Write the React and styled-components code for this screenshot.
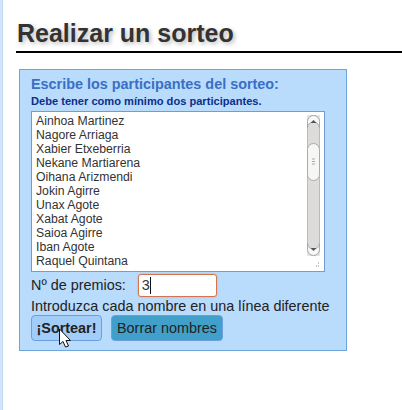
import React from 'react';
import styled, { createGlobalStyle } from 'styled-components';

const names = [
  'Ainhoa Martinez',
  'Nagore Arriaga',
  'Xabier Etxeberria',
  'Nekane Martiarena',
  'Oihana Arizmendi',
  'Jokin Agirre',
  'Unax Agote',
  'Xabat Agote',
  'Saioa Agirre',
  'Iban Agote',
  'Raquel Quintana',
];

const GlobalStyle = createGlobalStyle`
  html, body {
    margin: 0;
    padding: 0;
    background: #fff;
    font-family: "Liberation Sans", Arial, sans-serif;
    overflow: hidden;
  }
`;

const Page = styled.div`
  box-sizing: border-box;
  width: 402px;
  height: 410px;
  background: #fff;
  border-left: 2px solid #d3e6f9;
  box-shadow: inset 1px 0 0 #bcd8f3;
  padding: 15px 0 0 14px;
  overflow: hidden;
`;

const Title = styled.h1`
  margin: 0;
  padding: 3px 0 3px 1px;
  height: 30px;
  font-size: 25px;
  line-height: 30px;
  font-weight: bold;
  color: #333;
  text-shadow: 2px 2px 4px #bbb;
  border-bottom: 2px solid #000;
`;

const Panel = styled.div`
  box-sizing: border-box;
  width: 328px;
  height: 282px;
  margin: 16px 0 0 3px;
  padding: 6px 11px 0;
  background: #b9dbfc;
  border: 1px solid #6ea6dc;
  font-size: 14.4px;
  color: #222;
`;

const Heading = styled.div`
  font-size: 14.4px;
  line-height: 16px;
  font-weight: bold;
  color: #3a6fc4;
`;

const Note = styled.div`
  margin-top: 3px;
  font-size: 11.1px;
  line-height: 12px;
  font-weight: bold;
  color: #0b2f8a;
`;

const NameBox = styled.div`
  position: relative;
  box-sizing: border-box;
  width: 294px;
  height: 161px;
  margin-top: 4px;
  padding: 2px 4px;
  background: #fff;
  border: 1px solid #6f9fd0;
  overflow: hidden;
`;

const NameLine = styled.div`
  font-size: 12.24px;
  line-height: 14px;
  color: #333;
  white-space: nowrap;
`;

const Scroll = styled.svg`
  position: absolute;
  top: 3px;
  right: 4px;
`;

const FieldRow = styled.div`
  display: flex;
  align-items: center;
  gap: 12px;
  margin-top: 2px;
  height: 23px;
  line-height: 23px;
`;

const NumberField = styled.div`
  box-sizing: border-box;
  display: flex;
  align-items: center;
  width: 79px;
  height: 23px;
  padding: 0 3px;
  background: #fff;
  border: 1px solid #cf7650;
  border-radius: 3px;
  box-shadow: 0 0 2px #e8a080;
  font-size: 14.4px;
  color: #333;
`;

const Caret = styled.span`
  display: inline-block;
  width: 1px;
  height: 17px;
  background: #111;
`;

const Hint = styled.div`
  height: 18px;
  line-height: 18px;
  white-space: nowrap;
`;

const Buttons = styled.div`
  display: flex;
  gap: 9px;
`;

const Button = styled.div`
  position: relative;
  box-sizing: border-box;
  height: 26px;
  padding: 0 ${p => (p.$primary ? '4.5px' : '5px')};
  line-height: 24px;
  font-size: 14.4px;
  font-weight: ${p => (p.$primary ? 'bold' : 'normal')};
  color: #222;
  background: ${p => (p.$primary ? '#a3cdf9' : '#41a0c9')};
  border: 1px solid #6a9fe0;
  border-radius: 4px;
`;

const Pointer = styled.svg`
  position: absolute;
  left: 26px;
  top: 12px;
`;

export default function App() {
  return (
    <Page>
      <GlobalStyle />
      <Title>Realizar un sorteo</Title>
      <Panel>
        <Heading>Escribe los participantes del sorteo:</Heading>
        <Note>Debe tener como mínimo dos participantes.</Note>
        <NameBox>
          {names.map(n => <NameLine key={n}>{n}</NameLine>)}
          <Scroll width="13" height="154" viewBox="0 0 13 154">
            <rect x="0" y="0" width="13" height="141" fill="#e6e6e4" />
            <rect x="0.5" y="0.5" width="12" height="140" rx="6" fill="#dedcda" stroke="#bbb" />
            <path d="M.5 13V6.500a6 6 0 0 1 12 0V13a6 6 0 0 0-12 0z" fill="#f8f8f8" stroke="#aaa" />
            <path d="M3.500 8L6.500 5L9.500 8z" fill="#555" />
            <rect x="0.5" y="28.500" width="12" height="37" rx="6" fill="#f6f6f4" stroke="#aaa" />
            <path d="M5 44h3M5 46.500h3M5 49h3" stroke="#aaa" />
            <path d="M.5 128v6.500a6 6 0 0 0 12 0V128a6 6 0 0 1-12 0z" fill="#f8f8f8" stroke="#aaa" />
            <path d="M3.500 133L6.500 136L9.500 133z" fill="#555" />
            <path d="M11 148h1M9 151h1M11 151h1" stroke="#888" />
          </Scroll>
        </NameBox>
        <FieldRow>
          <span>Nº de premios:</span>
          <NumberField>3<Caret /></NumberField>
        </FieldRow>
        <Hint>Introduzca cada nombre en una línea diferente</Hint>
        <Buttons>
          <Button $primary>
            ¡Sortear!
            <Pointer width="14" height="20" viewBox="0 0 14 20">
              <path d="M1.500 1V16.500L5 13.500L7.500 19L10.500 18L8 12.500H12.500z" fill="#fff" stroke="#111" />
            </Pointer>
          </Button>
          <Button>Borrar nombres</Button>
        </Buttons>
      </Panel>
    </Page>
  );
}
